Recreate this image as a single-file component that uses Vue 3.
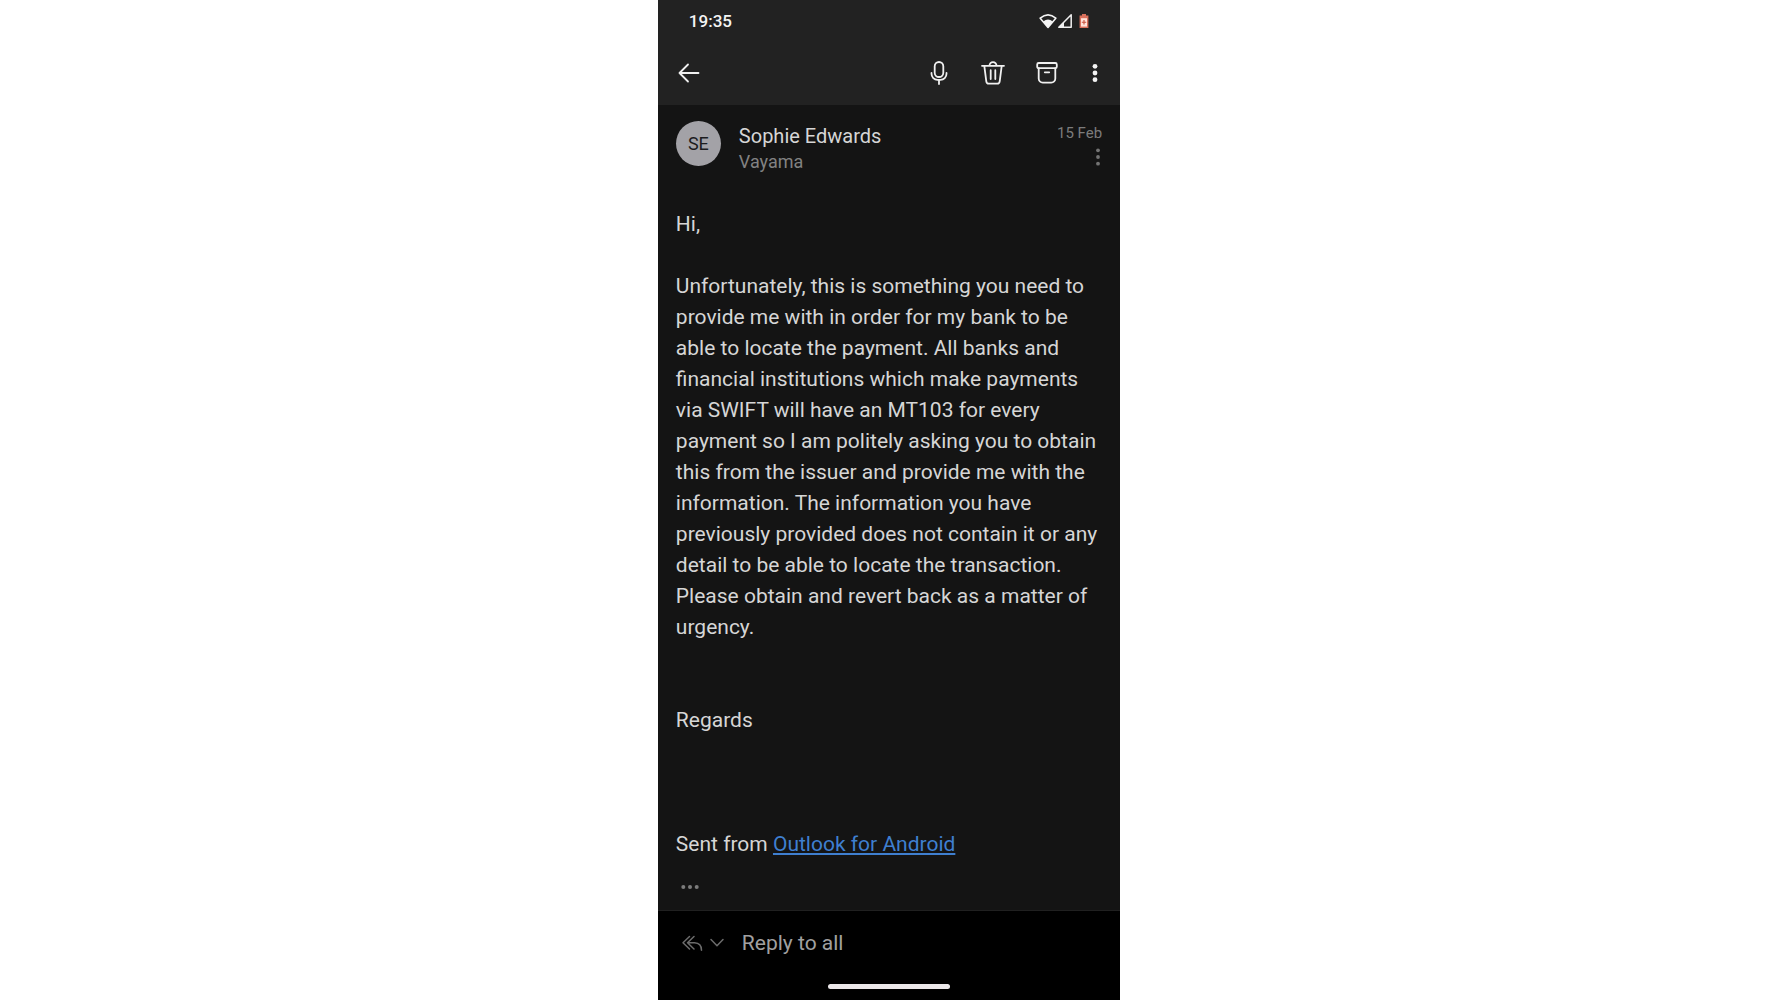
<template>
  <div class="page">
    <main class="phone">
      <!-- System status bar -->
      <div class="status-bar">
        <time class="clock">{{ clock }}</time>
        <div class="status-icons">
          <svg class="wifi" viewBox="0 0 18 16" aria-hidden="true">
            <path d="M1.2 5.2Q9 -1.6 16.8 5.2L9 14.4Z" fill="none" stroke="#f4f4f4" stroke-width="1.6" stroke-linejoin="round" />
            <path d="M4.2 8.4Q9 4.6 13.8 8.4L9 14.4Z" fill="#f4f4f4" />
          </svg>
          <svg class="signal" viewBox="0 0 16 16" aria-hidden="true">
            <path d="M1.8 14.2L14.2 1.8V14.2Z" fill="none" stroke="#f0f0f0" stroke-width="1.5" stroke-linejoin="round" />
            <path d="M1.5 14.5L7 9V14.5Z" fill="#f0f0f0" />
          </svg>
          <svg class="battery" viewBox="0 0 10 16" aria-hidden="true">
            <path d="M3 1h4v1.6h2.4V15H.6V2.6H3Z" fill="#d9705c" />
            <path d="M2 5.2h6v8.4H2Z" fill="#ffe3da" />
            <path d="M5 7v4.4M2.8 9.2h4.4" stroke="#c8503c" stroke-width="1.1" />
          </svg>
        </div>
      </div>

      <!-- Toolbar -->
      <header class="toolbar">
        <button class="icon-btn" type="button" aria-label="Back">
          <svg class="icon" viewBox="0 0 24 24">
            <path d="M21.5 12H2.5M11 3.5L2.500 12L11 20.5" />
          </svg>
        </button>
        <div class="actions">
          <button class="icon-btn" type="button" aria-label="Dictate">
            <svg class="icon" viewBox="0 0 24 24">
              <rect x="7.700" y="1" width="8.600" height="15" rx="4.300" />
              <path d="M4.500 12v.8a6 6 0 0 0 6 6h3a6 6 0 0 0 6-6V12M12 18.800V23" />
            </svg>
          </button>
          <button class="icon-btn" type="button" aria-label="Delete">
            <svg class="icon" viewBox="0 0 24 24">
              <path d="M1 4.800H23M8.500 4.600a3.500 3.500 0 0 1 7 0M3.300 4.800L5.300 20.300a2.600 2.600 0 0 0 2.600 2.300h8.200a2.600 2.600 0 0 0 2.600-2.300L20.700 4.800M9.700 9.200V18M14.300 9.200V18" />
            </svg>
          </button>
          <button class="icon-btn" type="button" aria-label="Archive">
            <svg class="icon" viewBox="0 0 24 24">
              <rect x="2.200" y="2" width="19.600" height="5.200" rx="1.500" />
              <path d="M3.700 7.200V17.600a4 4 0 0 0 4 4h8.600a4 4 0 0 0 4-4V7.200M9.800 11.300h4.400" />
            </svg>
          </button>
          <button class="icon-btn" type="button" aria-label="More options">
            <svg class="icon-more" viewBox="0 0 12 24">
              <circle v-for="y in [5.3, 12, 18.7]" :key="y" cx="6" :cy="y" r="2.400" />
            </svg>
          </button>
        </div>
      </header>

      <!-- Opened message -->
      <article class="message">
        <div class="message-head">
          <div class="avatar">{{ mail.initials }}</div>
          <div class="sender">
            <h1 class="name">{{ mail.from }}</h1>
            <p class="to">{{ mail.to }}</p>
          </div>
          <div class="meta">
            <time class="date">{{ mail.date }}</time>
            <button class="icon-btn" type="button" aria-label="Message options">
              <svg class="meta-more" viewBox="0 0 8 20">
                <circle v-for="y in [3.3, 10, 16.7]" :key="y" cx="4" :cy="y" r="1.900" />
              </svg>
            </button>
          </div>
        </div>

        <div class="body">
          <p class="greeting">Hi,</p>
          <p class="text">{{ mail.text }}</p>
          <p class="regards">Regards</p>
          <p>Sent from <a href="#">Outlook for Android</a></p>
        </div>

        <button class="icon-btn expand" type="button" aria-label="Show quoted text">
          <svg class="expand-dots" viewBox="0 0 20 6">
            <circle v-for="x in [3.3, 10, 16.7]" :key="x" :cx="x" cy="3" r="2" />
          </svg>
        </button>
      </article>

      <!-- Quick reply -->
      <footer class="reply-bar">
        <div class="reply-row">
          <button class="icon-btn reply-mode" type="button" aria-label="Reply options">
            <svg class="reply-icon" viewBox="0 0 22 18">
              <path d="M8.500 2.500L2 8.700L8.500 15M13 2.500L6.500 8.700L13 15M6.500 8.700H13.500Q20.500 9 20.500 16.200" />
            </svg>
            <svg class="chevron" viewBox="0 0 16 18">
              <path d="M2 5.500L8 11.700L14 5.500" />
            </svg>
          </button>
          <button class="reply" type="button">Reply to all</button>
        </div>
        <div class="home-bar"></div>
      </footer>
    </main>
  </div>
</template>

<script setup>
const clock = "19:35";

const mail = {
  initials: "SE",
  from: "Sophie Edwards",
  to: "Vayama",
  date: "15 Feb",
  text: "Unfortunately, this is something you need to provide me with in order for my bank to be able to locate the payment. All banks and financial institutions which make payments via SWIFT will have an MT103 for every payment so I am politely asking you to obtain this from the issuer and provide me with the information. The information you have previously provided does not contain it or any detail to be able to locate the transaction. Please obtain and revert back as a matter of urgency.",
};
</script>

<style>
body {
  margin: 0;
  background: #ffffff;
}
</style>

<style scoped>
.page {
  display: flex;
  justify-content: center;
  min-height: 100vh;
  font-family: Roboto, "Liberation Sans", sans-serif;
}
.phone {
  display: flex;
  flex-direction: column;
  width: 26vw;
  min-width: 460px;
  background: #141414;
  color: #d6d6d6;
}
p,
h1 {
  margin: 0;
  font-weight: 400;
}
button {
  margin: 0;
  padding: 0;
  border: 0;
  background: none;
  color: inherit;
  font-family: inherit;
  cursor: pointer;
}
svg {
  display: block;
}

/* Status bar */
.status-bar {
  display: flex;
  justify-content: space-between;
  align-items: center;
  height: 42px;
  padding: 0 31px;
  background: #222222;
}
.clock {
  color: #f4f4f4;
  font-size: 17px;
  font-weight: 500;
}
.status-icons {
  display: flex;
  align-items: center;
}
.wifi {
  width: 18px;
  height: 16px;
}
.signal {
  width: 16px;
  height: 16px;
}
.battery {
  width: 10px;
  height: 16px;
  margin-left: 6px;
}

/* Toolbar */
.toolbar {
  display: flex;
  justify-content: space-between;
  align-items: center;
  height: 61px;
  padding: 0 19px 2px;
  background: #222222;
}
.actions {
  display: flex;
  align-items: center;
  gap: 30px;
}
.icon {
  width: 24px;
  height: 24px;
  fill: none;
  stroke: #f0f0f0;
  stroke-width: 1.8;
  stroke-linecap: round;
  stroke-linejoin: round;
}
.icon-more {
  width: 12px;
  height: 24px;
  fill: #f4f4f4;
}

/* Message */
.message {
  flex: 1;
  padding: 16px 18px 0;
}
.message-head {
  display: flex;
  align-items: flex-start;
}
.avatar {
  display: flex;
  justify-content: center;
  align-items: center;
  width: 45px;
  height: 45px;
  border-radius: 50%;
  background: #a3a2a7;
  color: #1c1c1e;
  font-size: 18px;
}
.sender {
  flex: 1;
  margin-left: 18px;
}
.name {
  font-size: 20px;
  line-height: 30px;
}
.to {
  color: #828282;
  font-size: 18px;
  line-height: 22px;
}
.meta {
  display: flex;
  flex-direction: column;
  align-items: flex-end;
  color: #7c7c7c;
}
.date {
  font-size: 15px;
  line-height: 24px;
}
.meta-more {
  width: 8px;
  height: 20px;
  margin-top: 2px;
  fill: #747474;
}
.body {
  margin-top: 36px;
  font-size: 21px;
  line-height: 31px;
}
.greeting {
  margin-bottom: 31px;
}
.text {
  margin-bottom: 62px;
}
.regards {
  margin-bottom: 93px;
}
.body a {
  color: #3f7fd0;
  text-decoration: underline;
}
.expand {
  margin: 24px 0 16px 4px;
}
.expand-dots {
  width: 20px;
  height: 6px;
  fill: #7c7c7c;
}

/* Quick reply */
.reply-bar {
  display: flex;
  flex-direction: column;
  align-items: center;
  height: 89px;
  border-top: 1px solid #202020;
  background: #000000;
}
.reply-row {
  display: flex;
  align-items: center;
  align-self: stretch;
  height: 64px;
  padding: 0 23px;
}
.reply-mode {
  display: flex;
  align-items: center;
  gap: 6px;
}
.reply-icon,
.chevron {
  height: 18px;
  fill: none;
  stroke: #6c6c6c;
  stroke-width: 1.5;
  stroke-linecap: round;
  stroke-linejoin: round;
}
.reply-icon {
  width: 22px;
}
.chevron {
  width: 16px;
}
.reply {
  margin-left: 17px;
  color: #a0a0a0;
  font-size: 21px;
}
.home-bar {
  width: 122px;
  height: 5px;
  margin-top: 9px;
  border-radius: 3px;
  background: #ece8ea;
}
</style>
